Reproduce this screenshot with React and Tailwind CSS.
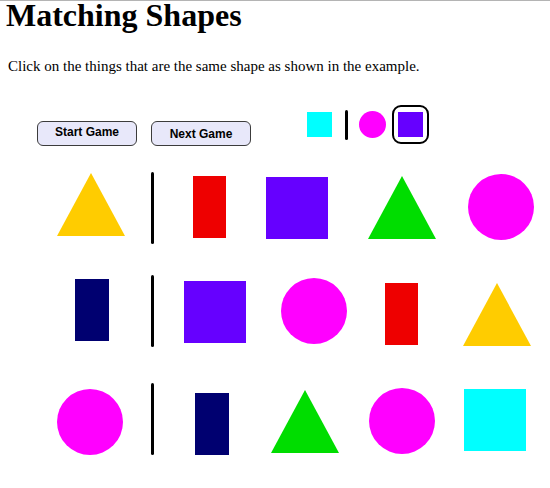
import React from 'react'

const colors = {
  yellow: 'bg-[#ffcc00]',
  red: 'bg-[#ee0000]',
  purple: 'bg-[#6600ff]',
  green: 'bg-[#00dd00]',
  magenta: 'bg-[#ff00ff]',
  navy: 'bg-[#000070]',
  cyan: 'bg-[#00ffff]',
}

const fills = {
  yellow: '#ffcc00',
  green: '#00dd00',
}

const Triangle = ({ color, className = '' }) => (
  <svg width="68" height="63" viewBox="0 0 68 63" className={`shrink-0 ${className}`}>
    <polygon points="34,0 68,63 0,63" fill={fills[color]} />
  </svg>
)

const Rect = ({ color, className = '' }) => (
  <div className={`shrink-0 w-[33px] h-[62px] ${colors[color]} ${className}`} />
)

const Square = ({ color, className = '' }) => (
  <div className={`shrink-0 w-[62px] h-[62px] ${colors[color]} ${className}`} />
)

const Circle = ({ className = '' }) => (
  <div className={`shrink-0 w-[66px] h-[66px] rounded-full bg-[#ff00ff] ${className}`} />
)

const Divider = ({ className = '' }) => (
  <div className={`shrink-0 w-[3px] h-[72px] rounded-full bg-black ${className}`} />
)

export default function App() {
  return (
    <div className="min-h-screen w-[550px] bg-white border-t border-[#b4b4b4] font-['Liberation_Serif',serif] text-black overflow-hidden">
      <h1 className="text-[32px] leading-[26px] pt-[1px] font-bold ml-[6px]">Matching Shapes</h1>

      <p className="text-[15px] leading-[17px] ml-[8px] mt-[30px]">
        Click on the things that are the same shape as shown in the example.
      </p>

      {/* controls + example */}
      <div className="flex items-start mt-[30px] h-[40px]">
        <button className="shrink-0 ml-[37px] mt-[16px] w-[100px] h-[25px] pb-[3px] rounded-[6px] border border-[#3c3c3c] bg-[#e8e8fa] font-['Liberation_Sans',sans-serif] font-bold text-[12px] leading-none">
          Start Game
        </button>
        <button className="shrink-0 ml-[14px] mt-[16px] w-[100px] h-[25px] rounded-[6px] border border-[#3c3c3c] bg-[#e8e8fa] font-['Liberation_Sans',sans-serif] font-bold text-[12px] leading-none">
          Next Game
        </button>
        <div className="shrink-0 ml-[56px] mt-[7px] w-[25px] h-[25px] bg-[#00ffff]" />
        <div className="shrink-0 ml-[13px] mt-[5px] w-[3px] h-[30px] rounded-full bg-black" />
        <div className="shrink-0 ml-[11px] mt-[6px] w-[27px] h-[27px] rounded-full bg-[#ff00ff]" />
        <div className="shrink-0 ml-[6px] w-[37px] h-[39px] rounded-[9px] border-2 border-black pl-[4px] pt-[5px]">
          <div className="w-[25px] h-[25px] bg-[#6600ff]" />
        </div>
      </div>

      {/* row 1 */}
      <div className="flex items-start mt-[27px]">
        <Triangle color="yellow" className="ml-[57px] mt-[1px]" />
        <Divider className="ml-[26px]" />
        <Rect color="red" className="ml-[39px] mt-[4px]" />
        <Square color="purple" className="ml-[40px] mt-[5px]" />
        <Triangle color="green" className="ml-[40px] mt-[4px]" />
        <Circle className="ml-[32px] mt-[2px]" />
      </div>

      {/* row 2 */}
      <div className="flex items-start mt-[31px]">
        <Rect color="navy" className="ml-[75px] mt-[4px] w-[34px]" />
        <Divider className="ml-[42px]" />
        <Square color="purple" className="ml-[30px] mt-[6px]" />
        <Circle className="ml-[35px] mt-[3px]" />
        <Rect color="red" className="ml-[38px] mt-[8px]" />
        <Triangle color="yellow" className="ml-[45px] mt-[8px]" />
      </div>

      {/* row 3 */}
      <div className="flex items-start mt-[36px]">
        <Circle className="ml-[57px] mt-[6px]" />
        <Divider className="ml-[28px]" />
        <Rect color="navy" className="ml-[41px] mt-[10px] w-[34px]" />
        <Triangle color="green" className="ml-[42px] mt-[7px]" />
        <Circle className="ml-[30px] mt-[5px]" />
        <Square color="cyan" className="ml-[29px] mt-[6px]" />
      </div>
    </div>
  )
}
